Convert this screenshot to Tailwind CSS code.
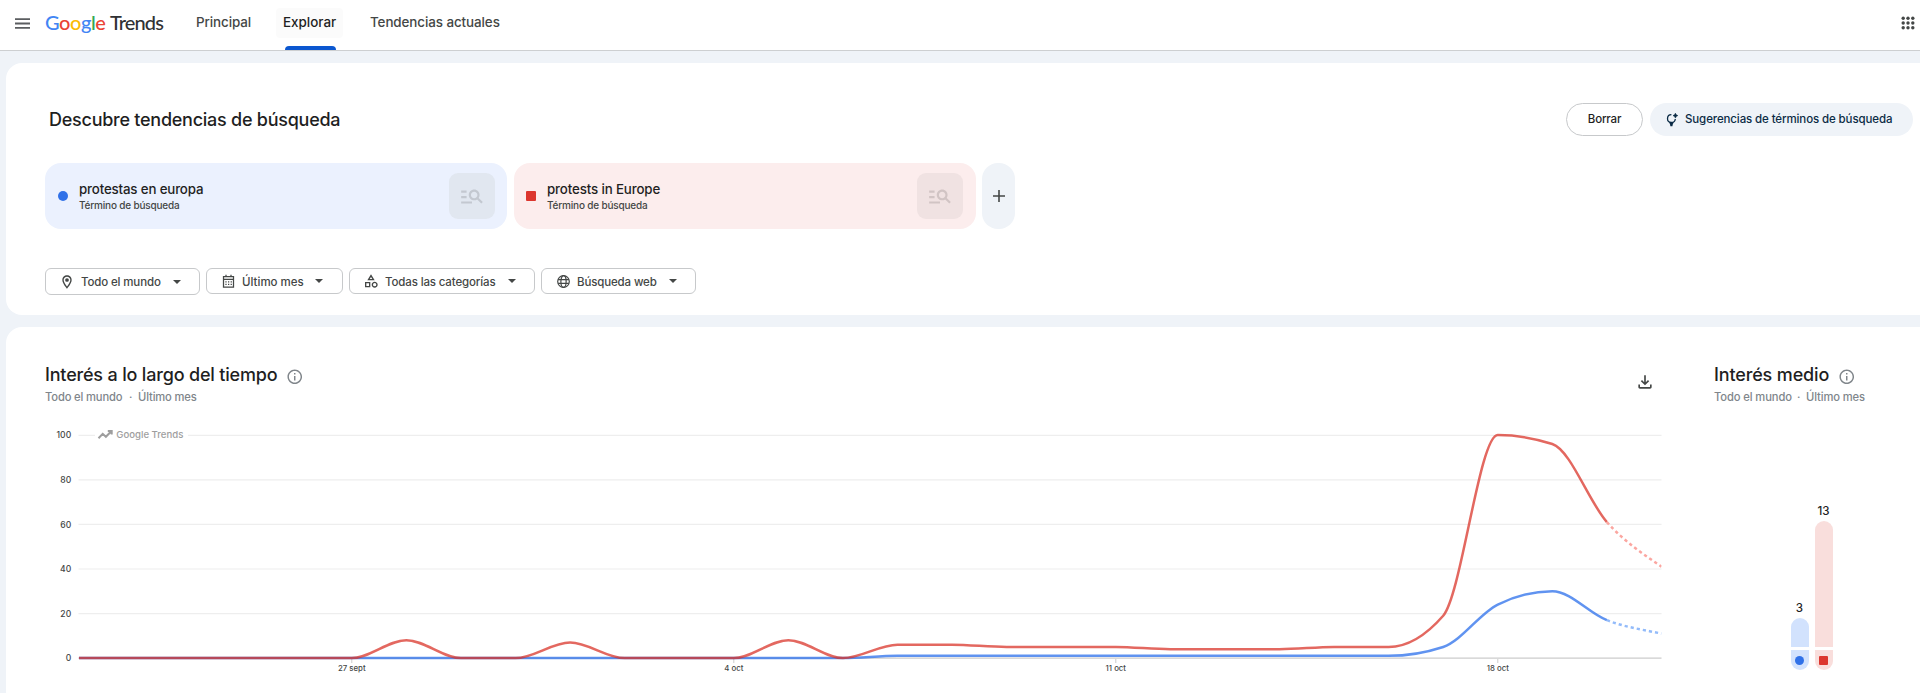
<!DOCTYPE html>
<html lang="es">
<head>
<meta charset="utf-8">
<title>Google Trends - Explorar</title>
<script src="https://cdn.jsdelivr.net/npm/@tailwindcss/browser@4"></script>
</head>
<body class="h-[693px] overflow-hidden bg-[#eff3f8] font-[Inter,sans-serif] font-[450] text-[#1f1f1f]">

<svg class="hidden">
  <symbol id="info" viewBox="0 0 24 24"><path d="M11 7h2v2h-2zm0 4h2v6h-2zm1-9C6.48 2 2 6.48 2 12s4.48 10 10 10 10-4.48 10-10S17.52 2 12 2zm0 18c-4.41 0-8-3.59-8-8s3.59-8 8-8 8 3.59 8 8-3.59 8-8 8z"/></symbol>
  <symbol id="msearch" viewBox="0 0 24 24"><path d="M7 9H2V7h5v2zm0 3H2v2h5v-2zm13.59 7-3.83-3.83c-.8.52-1.74.83-2.76.83-2.76 0-5-2.24-5-5s2.24-5 5-5 5 2.24 5 5c0 1.02-.31 1.96-.83 2.75L22 17.59 20.59 19zM17 11c0-1.65-1.35-3-3-3s-3 1.35-3 3 1.35 3 3 3 3-1.35 3-3zM2 19h10v-2H2v2z"/></symbol>
  <symbol id="arrow" viewBox="0 0 8 4"><path d="M0 0h8L4 4z"/></symbol>
</svg>

<header class="flex h-[51px] border-b border-[#cdcfd1] bg-white">
  <svg class="mt-[18px] ml-[15px] h-[11px] w-[15px] shrink-0 text-[#5b5d60]" viewBox="0 0 15 11" stroke="currentColor" stroke-width="1.8"><path d="M0 1.1h15M0 5.5h15M0 9.9h15"/></svg>
  <div class="mt-[10px] ml-[15px] flex w-[151px] shrink-0 font-[Lato,sans-serif] text-[20px] leading-6">
    <span class="w-[65px] tracking-[-0.022em]"><span class="text-[#4285f4]">G</span><span class="text-[#ea4335]">o</span><span class="text-[#fbbc04]">o</span><span class="text-[#4285f4]">g</span><span class="text-[#34a853]">l</span><span class="text-[#ea4335]">e</span></span>
    <span class="tracking-[-0.045em] text-[#303134]">Trends</span>
  </div>
  <nav class="flex text-[13.4px] leading-5 text-[#444746]">
    <a class="mt-[12px] w-[80px] tracking-[-0.006em]">Principal</a>
    <a class="relative mt-[8px] h-[30px] w-[67px] rounded bg-[#fbfbfb] pt-1 pl-[7px] text-[#1f1f1f]">Explorar<span class="absolute top-[38px] left-[9px] h-[4px] w-[51px] rounded-t-sm bg-[#0b57d0]"></span></a>
    <a class="mt-[12px] ml-[27px] tracking-[-0.006em]">Tendencias actuales</a>
  </nav>
  <svg class="mt-[16px] mr-[5px] ml-auto size-[14px] text-[#444746]" viewBox="0 0 14 14" fill="currentColor"><circle cx="2.2" cy="2.2" r="1.7"/><circle cx="7" cy="2.2" r="1.7"/><circle cx="11.8" cy="2.2" r="1.7"/><circle cx="2.2" cy="7" r="1.7"/><circle cx="7" cy="7" r="1.7"/><circle cx="11.8" cy="7" r="1.7"/><circle cx="2.2" cy="11.8" r="1.7"/><circle cx="7" cy="11.8" r="1.7"/><circle cx="11.8" cy="11.8" r="1.7"/></svg>
</header>

<main class="ml-[6px] pt-3">
  <section class="h-[252px] rounded-l-2xl bg-white pt-10 pl-[39px]">
    <div class="flex h-[33px] items-center pr-[7px]">
      <h1 class="mr-auto pl-1 text-[18px] leading-6 font-[450] tracking-[-0.014em]">Descubre tendencias de búsqueda</h1>
      <button class="h-[33px] w-[77px] rounded-full border border-[#c7c9cb] pt-px text-[11.5px] tracking-[-0.015em]">Borrar</button>
      <button class="ml-[7px] flex h-[33px] w-[263px] items-center rounded-full bg-[#eff3f8] pl-[16px] text-[11.5px] tracking-[-0.01em] text-[#0b2b45]">
        <svg class="mr-[7px] h-[14px] w-[12px]" viewBox="0 0 12 14" fill="none"><path d="M5.4 1.7A3.9 3.9 0 1 0 9.3 6" stroke="currentColor" stroke-width="1.3"/><path d="M3 9.2h4.8l-1 2.1-.4 1.9H4.4L4 11.3z" fill="currentColor"/><path d="M9.4.2l.8 1.6 1.6.8-1.6.8-.8 1.7-.8-1.7-1.6-.8 1.6-.8z" fill="currentColor" stroke="currentColor" stroke-width=".6"/></svg>
        <span class="pt-px">Sugerencias de términos de búsqueda</span>
      </button>
    </div>

    <div class="mt-[27px] flex h-[66px] gap-[7px]">
      <div class="flex w-[462px] items-center rounded-2xl bg-[#ebf1fe] pr-[12px] pl-[13px]">
        <span class="size-[10px] rounded-full bg-[#3071e8]"></span>
        <div class="mr-auto ml-[11px]">
          <div class="text-[13.3px] leading-[18px] tracking-[-0.012em]">protestas en europa</div>
          <div class="text-[10px] leading-[15px] tracking-[-0.018em] text-[#444746]">Término de búsqueda</div>
        </div>
        <div class="grid size-[46px] place-items-center rounded-[9px] bg-[#e1e7f0]"><svg class="size-[26px] fill-[#c3c8d0]"><use href="#msearch"/></svg></div>
      </div>
      <div class="flex w-[462px] items-center rounded-2xl bg-[#fceded] pr-[13px] pl-[12px]">
        <span class="size-[10px] rounded-[1px] bg-[#dc362e]"></span>
        <div class="mr-auto ml-[11px]">
          <div class="text-[13.3px] leading-[18px] tracking-[-0.01em]">protests in Europe</div>
          <div class="text-[10px] leading-[15px] tracking-[-0.018em] text-[#444746]">Término de búsqueda</div>
        </div>
        <div class="grid size-[46px] place-items-center rounded-[9px] bg-[#f0e2e2]"><svg class="size-[26px] fill-[#d1c4c4]"><use href="#msearch"/></svg></div>
      </div>
      <button class="-ml-px grid w-[33px] place-items-center rounded-2xl bg-[#eff3f8]"><svg class="size-[12px] text-[#444746]" viewBox="0 0 12 12" stroke="currentColor" stroke-width="1.6"><path d="M0 6h12M6 0v12"/></svg></button>
    </div>

    <div class="mt-[39px] flex items-start gap-[6px] text-[11.5px] tracking-[-0.012em] text-[#444746]">
      <button class="flex h-[27px] w-[155px] items-center rounded-md border border-[#c7c9cb] pl-[13px]">
        <svg class="mr-[6px] size-4" viewBox="0 0 24 24" fill="currentColor"><path d="M12 2C8.13 2 5 5.13 5 9c0 5.25 7 13 7 13s7-7.75 7-13c0-3.87-3.13-7-7-7zM7 9c0-2.76 2.24-5 5-5s5 2.24 5 5c0 2.88-2.88 7.19-5 9.88C9.92 16.21 7 11.85 7 9z"/><circle cx="12" cy="9" r="2.8"/></svg>
        <span class="w-[92px] pt-[2px] text-left">Todo el mundo</span><svg class="h-1 w-2 fill-current"><use href="#arrow"/></svg>
      </button>
      <button class="flex h-[26px] w-[137px] items-center rounded-md border border-[#c7c9cb] pl-[14px]">
        <svg class="mr-[6px] size-[15px]" viewBox="0 0 24 24" fill="none" stroke="currentColor" stroke-width="2"><path d="M4 4h16v17H4zM4 8.5h16M8 1v3M16 1v3"/><path d="M7 12.5h10.5M7 16.5h10.5" stroke-dasharray="2 2.2"/></svg>
        <span class="w-[73px] pt-[3px] text-left tracking-[0]">Último mes</span><svg class="h-1 w-2 fill-current"><use href="#arrow"/></svg>
      </button>
      <button class="flex h-[26px] w-[186px] items-center rounded-md border border-[#c7c9cb] pl-[13px]">
        <svg class="mr-[6px] size-4" viewBox="0 0 24 24" fill="currentColor"><path d="M12 2l-5.5 9h11L12 2zm0 3.84L13.93 9h-3.87L12 5.84zM17.5 13c-2.49 0-4.5 2.01-4.5 4.5s2.01 4.5 4.5 4.5 4.5-2.01 4.5-4.5-2.01-4.5-4.5-4.5zm0 7a2.5 2.5 0 010-5 2.5 2.5 0 010 5zM3 21.5h8v-8H3v8zm2-6h4v4H5v-4z"/></svg>
        <span class="w-[123px] pt-[3px] text-left">Todas las categorías</span><svg class="h-1 w-2 fill-current"><use href="#arrow"/></svg>
      </button>
      <button class="flex h-[26px] w-[155px] items-center rounded-md border border-[#c7c9cb] pl-[14px]">
        <svg class="mr-[6px] size-[15px]" viewBox="0 0 24 24" fill="none" stroke="currentColor" stroke-width="1.9"><circle cx="12" cy="12" r="9.3"/><ellipse cx="12" cy="12" rx="4.2" ry="9.3"/><path d="M3.4 9h17.2M3.4 15h17.2"/></svg>
        <span class="w-[92px] pt-[3px] text-left">Búsqueda web</span><svg class="h-1 w-2 fill-current"><use href="#arrow"/></svg>
      </button>
    </div>
  </section>

  <section class="mt-3 flex h-[380px] rounded-l-2xl bg-white pt-9 pl-[39px]">
    <div class="w-[1668px] shrink-0">
      <div class="flex h-[57px]">
        <div class="mr-auto">
          <h2 class="flex items-center text-[18px] leading-6 font-[450] tracking-[-0.01em]">Interés a lo largo del tiempo<svg class="mt-1 ml-[9px] size-[17.5px] fill-[#80868b]"><use href="#info"/></svg></h2>
          <p class="mt-[2px] flex text-[11.2px] leading-4 tracking-[-0.013em] text-[#80868b]"><span class="w-[84px]">Todo el mundo</span><span class="w-[9px]">·</span><span>Último mes</span></p>
        </div>
        <svg class="mt-[9px] mr-[58px] size-5 fill-[#444746]" viewBox="0 0 24 24"><path d="M18 15v3H6v-3H4v3c0 1.1.9 2 2 2h12c1.1 0 2-.9 2-2v-3h-2zM17 11l-1.41-1.41L13 12.17V4h-2v8.17L8.41 9.59 7 11l5 5z"/></svg>
      </div>
      <svg class="h-[266px] w-[1625px]" viewBox="45 420 1625 266" fill="none">
        <path d="M78.5 435.3H95M188 435.3H1661.5M78.5 479.8H1661.5M78.5 524.4H1661.5M78.5 569H1661.5M78.5 613.6H1661.5" stroke="#eeeeee" stroke-width="1.2"/>
        <path d="M78.5 658.2H1661.5" stroke="#cccccc" stroke-width="1.3"/>
        <path d="M351.8 659v4M733.8 659v4M1115.8 659v4M1497.8 659v4" stroke="#cccccc"/>
        <g fill="#444746" font-family="Inter" font-size="8.6" text-anchor="end"><text x="71.2" y="438.4">100</text><text x="71.2" y="483">80</text><text x="71.2" y="527.5">60</text><text x="71.2" y="572.2">40</text><text x="71.2" y="616.8">20</text><text x="71.2" y="661.3">0</text></g>
        <g fill="#444746" font-family="Inter" font-size="7.8" text-anchor="middle"><text x="351.8" y="671.3">27 sept</text><text x="733.8" y="671.3">4 oct</text><text x="1115.8" y="671.3">11 oct</text><text x="1497.8" y="671.3">18 oct</text></g>
        <path d="M98.5 438.2l4.2-4.4 3.2 3 5.4-5.6M107.8 431h3.9v3.6" stroke="#9e9e9e" stroke-width="2"/>
        <text x="116.3" y="438.3" fill="#9e9e9e" font-family="Inter" font-size="9.6">Google Trends</text>
        <clipPath id="area"><path d="M78.5 425H1661.5V670H78.5z"/></clipPath>
        <g clip-path="url(#area)">
          <path id="b1" stroke="#3072eb" stroke-opacity=".77" stroke-width="2.5"/>
          <path id="b2" stroke="#93bbfa" stroke-width="2.5" stroke-dasharray="3.2 3"/>
          <path id="r1" stroke="#d93025" stroke-opacity=".73" stroke-width="2.5"/>
          <path id="r2" stroke="#fba6a0" stroke-width="2.5" stroke-dasharray="3.2 3"/>
        </g>
      </svg>
    </div>

    <div>
      <h2 class="flex items-center pl-px text-[18px] leading-6 font-[450] tracking-[-0.008em]">Interés medio<svg class="mt-1 ml-[9px] size-[17.5px] fill-[#80868b]"><use href="#info"/></svg></h2>
      <p class="mt-[2px] flex text-[11.2px] leading-4 tracking-[-0.01em] text-[#80868b]"><span class="w-[84px] pl-px">Todo el mundo</span><span class="w-[9px]">·</span><span>Último mes</span></p>
      <div class="flex h-[265px] items-end gap-[6px] pl-[77.5px] text-center text-[11.6px] leading-4">
        <div class="w-[18px]">
          <div class="mb-[2px]">3</div>
          <div class="h-[29px] rounded-t-full bg-[#d2e2fd]"></div>
          <div class="mt-[3px] grid h-[20px] place-items-center rounded-b-full bg-[#d2e2fd]"><span class="size-[9px] rounded-full bg-[#3071e8]"></span></div>
        </div>
        <div class="w-[18px]">
          <div class="mb-[2px]">13</div>
          <div class="h-[126px] rounded-t-full bg-[#f9dedc]"></div>
          <div class="mt-[3px] grid h-[20px] place-items-center rounded-b-full bg-[#f9dedc]"><span class="size-[9px] rounded-[1px] bg-[#dc362e]"></span></div>
        </div>
      </div>
    </div>
  </section>
</main>

<script>
  const red = [0,0,0,0,0,0,8,0,0,7,0,0,0,8,0,6,6,5,5,5,4,4,4,5,5,19,100,96,61,41];
  const blue = [0,0,0,0,0,0,0,0,0,0,0,0,0,0,0,1,1,1,1,1,1,1,1,1,1,5,24,30,17,11];
  const step = 54.57, x = i => 78.95 + i * step, y = v => 658.1 - v * 2.23;
  // Monotone cubic interpolation, drawn from point `from` to point `to`
  function curve(v, from, to) {
    const s = i => v[i + 1] - v[i];
    const m = v.map((_, i) => {
      if (i === 0) return s(0);
      if (i === v.length - 1) return s(i - 1) * 0.85;
      const a = s(i - 1), b = s(i);
      return (Math.sign(a) + Math.sign(b)) * Math.min(Math.abs(a), Math.abs(b), Math.abs(a + b) / 4);
    });
    let d = `M${x(from)} ${y(v[from])}`;
    for (let i = from; i < to; i++)
      d += `C${x(i) + step / 3} ${y(v[i] + m[i] / 3)} ${x(i + 1) - step / 3} ${y(v[i + 1] - m[i + 1] / 3)} ${x(i + 1)} ${y(v[i + 1])}`;
    return d;
  }
  for (const [id, v, a, b] of [['r1', red, 0, 28], ['r2', red, 28, 29], ['b1', blue, 0, 28], ['b2', blue, 28, 29]])
    document.getElementById(id).setAttribute('d', curve(v, a, b));
</script>
</body>
</html>
